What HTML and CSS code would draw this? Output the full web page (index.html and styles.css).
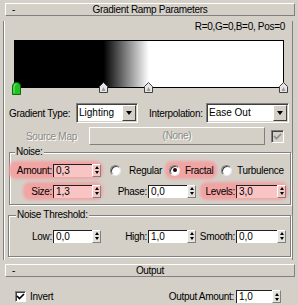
FILE: index.html
```html
<!DOCTYPE html>
<html>
<head>
<meta charset="utf-8">
<link rel="stylesheet" href="styles.css">
</head>
<body>
<div class="rollbar"><span class="toggle">-</span><span class="bar-title">Gradient Ramp Parameters</span><span></span></div>
<div class="rollout">
  <div class="rgb">R=0,G=0,B=0, Pos=0</div>
  <div class="ramp"></div>
  <div class="flags">
    <svg class="flag flag-green" width="9" height="13" viewBox="0 0 9 13"><path d="M0.5 12.5 V5 Q0.5 0.5 4.5 0.5 Q8.5 0.5 8.5 5 V12.5 Z" fill="#1fc21f" stroke="#0b6e0b"/><path d="M2 11 V5 Q2 2 4.5 2" fill="none" stroke="#7fe87f"/></svg>
    <svg class="flag flag-w1" width="9" height="11" viewBox="0 0 9 11"><path d="M0.5 10.5 V4.5 L4.5 0.5 L8.5 4.5 V10.5 Z" fill="#e6e6e6" stroke="#404040"/><path d="M2.5 9 L4.5 5 L6.5 9 Z" fill="#9a9a9a"/></svg>
    <svg class="flag flag-w2" width="9" height="11" viewBox="0 0 9 11"><path d="M0.5 10.5 V4.5 L4.5 0.5 L8.5 4.5 V10.5 Z" fill="#e6e6e6" stroke="#404040"/><path d="M2.5 9 L4.5 5 L6.5 9 Z" fill="#9a9a9a"/></svg>
    <svg class="flag flag-w3" width="9" height="11" viewBox="0 0 9 11"><path d="M0.5 10.5 V4.5 L4.5 0.5 L8.5 4.5 V10.5 Z" fill="#e6e6e6" stroke="#404040"/><path d="M2.5 9 L4.5 5 L6.5 9 Z" fill="#9a9a9a"/></svg>
  </div>
  <div class="row row-type">
    <span class="lbl lbl-type">Gradient Type:</span>
    <div class="combo combo-type"><span class="combo-text">Lighting</span><span class="combo-btn"><i class="down"></i></span></div>
    <span class="lbl lbl-interp">Interpolation:</span>
    <div class="combo combo-interp"><span class="combo-text">Ease Out</span><span class="combo-btn"><i class="down"></i></span></div>
  </div>
  <div class="row row-map">
    <span class="lbl lbl-map">Source Map</span>
    <div class="map-btn">(None)</div>
    <span class="check check-dis"><svg width="11" height="11" viewBox="0 0 11 11"><polyline points="2,5 4.5,7.5 9,3" fill="none" stroke="#8a8a8a" stroke-width="1.6"/></svg></span>
  </div>
  <fieldset class="group group-noise">
    <legend>Noise:</legend>
    <div class="grow">
      <div class="cell cell-a">
        <span class="hl hl-amount"><span class="lbl">Amount:</span><span class="spinner"><span class="field">0,3</span><span class="spin"><i class="up"></i><i class="dn"></i></span></span></span>
      </div>
      <span class="opt opt-regular"><span class="radio"></span>Regular</span>
      <span class="hl hl-fractal"><span class="radio radio-on"><i></i></span>Fractal</span>
      <span class="opt opt-turb"><span class="radio"></span>Turbulence</span>
    </div>
    <div class="grow">
      <div class="cell cell-a">
        <span class="hl hl-size"><span class="lbl">Size:</span><span class="spinner"><span class="field">1,3</span><span class="spin"><i class="up"></i><i class="dn"></i></span></span></span>
      </div>
      <div class="cell cell-b">
        <span class="lbl">Phase:</span><span class="spinner"><span class="field">0,0</span><span class="spin"><i class="up"></i><i class="dn"></i></span></span>
      </div>
      <div class="cell cell-c">
        <span class="hl hl-levels"><span class="lbl">Levels:</span><span class="spinner spinner-wide"><span class="field">3,0</span><span class="spin"><i class="up"></i><i class="dn"></i></span></span></span>
      </div>
    </div>
  </fieldset>
  <fieldset class="group group-thresh">
    <legend>Noise Threshold:</legend>
    <div class="grow">
      <div class="cell cell-a">
        <span class="lbl">Low:</span><span class="spinner"><span class="field">0,0</span><span class="spin"><i class="up"></i><i class="dn"></i></span></span>
      </div>
      <div class="cell cell-b">
        <span class="lbl">High:</span><span class="spinner"><span class="field">1,0</span><span class="spin"><i class="up"></i><i class="dn"></i></span></span>
      </div>
      <div class="cell cell-c">
        <span class="lbl">Smooth:</span><span class="spinner spinner-wide"><span class="field">0,0</span><span class="spin"><i class="up"></i><i class="dn"></i></span></span>
      </div>
    </div>
  </fieldset>
</div>
<div class="rollbar rollbar-output"><span class="toggle">-</span><span class="bar-title">Output</span><span></span></div>
<div class="row row-output">
  <span class="check"><svg width="11" height="11" viewBox="0 0 11 11"><polyline points="2,5 4.5,7.5 9,3" fill="none" stroke="#000" stroke-width="1.7"/></svg></span>
  <span class="lbl lbl-invert">Invert</span>
  <span class="lbl lbl-oa">Output Amount:</span>
  <span class="spinner spinner-oa"><span class="field">1,0</span><span class="spin"><i class="up"></i><i class="dn"></i></span></span>
</div>
</body>
</html>
```

FILE: styles.css
```css
* { box-sizing: border-box; }
html, body { margin: 0; padding: 0; }
body {
  width: 298px;
  height: 305px;
  overflow: hidden;
  background: #d4d0c8;
  font-family: "Liberation Sans", Arial, sans-serif;
  font-size: 10px;
  letter-spacing: -0.3px;
  color: #000;
}

/* rollout title bars */
.rollbar {
  margin: 3px 3px 0 5px;
  height: 13px;
  border: 1px solid;
  border-color: #fff #808080 #808080 #fff;
  display: grid;
  grid-template-columns: 1fr auto 1fr;
  align-items: center;
  line-height: 11px;
}
.toggle { padding-left: 6px; }
.rollbar-output { margin-top: 4px; }

.rollout {
  margin: 0 5px 0 3px;
  border-left: 1px solid #808080;
  border-right: 1px solid #808080;
  box-shadow: inset 1px 0 #fff;
  padding-bottom: 3px;
}

.rgb {
  margin-top: 5px;
  text-align: right;
  padding-right: 7px;
  line-height: 12px;
}

.ramp {
  margin: 7px 0 0 10px;
  width: 270px;
  height: 48px;
  border: 1px solid #000;
  background: linear-gradient(to right, #000 0%, #000 33%, #fff 50%, #fff 100%);
}

.flags { position: relative; height: 13px; margin-top: -6px; }
.flag { position: absolute; top: 0; display: block; }
.flag-green { left: 8px; }
.flag-w1 { left: 95px; }
.flag-w2 { left: 140px; }
.flag-w3 { left: 275px; }

.row { display: flex; align-items: center; }
.lbl { white-space: nowrap; }

.row-type { margin-top: 8px; height: 20px; padding-left: 5px; }
.lbl-type { width: 67px; }
.lbl-interp { margin-left: 11px; width: 57px; }
.combo {
  height: 20px;
  display: flex;
  background: #fff;
  border: 1px solid;
  border-color: #808080 #fff #fff #808080;
  box-shadow: inset 1px 1px #404040, inset -1px -1px #d4d0c8;
}
.combo-type { width: 62px; }
.combo-interp { width: 83px; }
.combo-text { flex: 1; padding-left: 2px; line-height: 18px; letter-spacing: 0; }
.combo-btn {
  width: 14px;
  margin: 1px 1px 1px 0;
  background: #d4d0c8;
  border: 1px solid;
  border-color: #fff #404040 #404040 #fff;
  display: flex;
  align-items: center;
  justify-content: center;
}
.down {
  width: 0; height: 0;
  border-left: 3px solid transparent;
  border-right: 3px solid transparent;
  border-top: 4px solid #000;
}

.row-map { margin-top: 4px; height: 18px; padding-left: 22px; }
.lbl-map { width: 63px; color: #8c8a84; text-shadow: 1px 1px #fff; }
.map-btn {
  width: 176px;
  height: 18px;
  border: 1px solid;
  border-color: #fff #808080 #808080 #fff;
  text-align: center;
  line-height: 16px;
  color: #8c8a84;
  text-shadow: 1px 1px #fff;
}
.check {
  width: 11px;
  height: 11px;
  background: #fff;
  border: 1px solid;
  border-color: #808080 #fff #fff #808080;
  box-shadow: inset 1px 1px #404040;
  display: flex;
  align-items: center;
  justify-content: center;
}
.check svg { display: block; flex: none; }
.check-dis { margin-left: 6px; width: 13px; height: 13px; background: #d4d0c8; }

/* group boxes */
.group {
  margin: 0;
  padding: 0;
  min-inline-size: 0;
  border: 1px solid #808080;
  box-shadow: 1px 1px 0 #fff, inset 1px 1px 0 #fff;
}
.group legend {
  padding: 0 1px;
  line-height: 12px;
  background: #d4d0c8;
}
.group-noise { margin: 1px 1px 0 5px; padding: 4px 0 5px 0; }
.group-noise legend { margin-left: 5px; }
.group-thresh { margin: 4px 1px 0 4px; padding: 7px 0 12px 0; }
.group-thresh legend { margin-left: 7px; }

.grow { display: flex; align-items: center; height: 16px; }
.grow + .grow { margin-top: 5px; }
.cell { display: flex; justify-content: flex-end; align-items: center; flex: none; }
.cell .lbl { margin-right: 1px; }
.cell-a { width: 91px; }
.group-thresh .cell-a { width: 92px; }
.cell-b { width: 95px; }
.cell-c { width: 90px; }

/* highlight glow */
.hl {
  display: flex;
  align-items: center;
  height: 14px;
  background: #f1a4a4;
  border-radius: 5px;
  box-shadow: 0 0 3px 2px #f1a4a4;
}
.hl-amount { padding-left: 6px; }
.hl-size { padding-left: 6px; }
.hl-levels { padding-left: 3px; }
.hl-fractal { width: 48px; margin-left: 2px; padding-left: 2px; }

/* spinners */
.spinner { display: flex; height: 13px; width: 48px; flex: none; }
.spinner-wide { width: 50px; }
.spinner-oa { width: 45px; margin-right: 17px; }
.field {
  flex: 1;
  background: #fff;
  border-top: 1px solid #202020;
  border-left: 1px solid #202020;
  padding-left: 2px;
  line-height: 12px;
  letter-spacing: 0;
}
.hl .field { background: #f8c4c4; }
.spin {
  width: 9px;
  display: flex;
  flex-direction: column;
  justify-content: center;
  align-items: center;
  gap: 2px;
  background: #e4e2dc;
  border: 1px solid;
  border-color: #fff #808080 #808080 #fff;
}
.hl .spin { background: #f4c6c6; }
.up, .dn { width: 0; height: 0; border-left: 2px solid transparent; border-right: 2px solid transparent; }
.up { border-bottom: 3px solid #000; }
.dn { border-top: 3px solid #000; }

/* radios */
.opt, .hl-fractal { display: flex; align-items: center; white-space: nowrap; flex: none; }
.radio {
  width: 11px;
  height: 11px;
  border-radius: 50%;
  background: #fff;
  border: 1px solid;
  border-color: #808080 #e8e8e8 #e8e8e8 #808080;
  box-shadow: inset 1px 1px #404040;
  margin-right: 5px;
  display: flex;
  align-items: center;
  justify-content: center;
  flex: none;
}
.radio-on i { width: 4px; height: 4px; border-radius: 50%; background: #300; }
.opt-regular { margin-left: 9px; width: 55px; }
.opt-regular .radio { margin-right: 8px; }
.opt-turb { margin-left: 6px; }

/* output rollout */
.row-output { margin-top: 13px; height: 13px; padding-left: 15px; }
.lbl-invert { margin-left: 4px; }
.lbl-oa { margin-left: auto; margin-right: 2px; }
```
